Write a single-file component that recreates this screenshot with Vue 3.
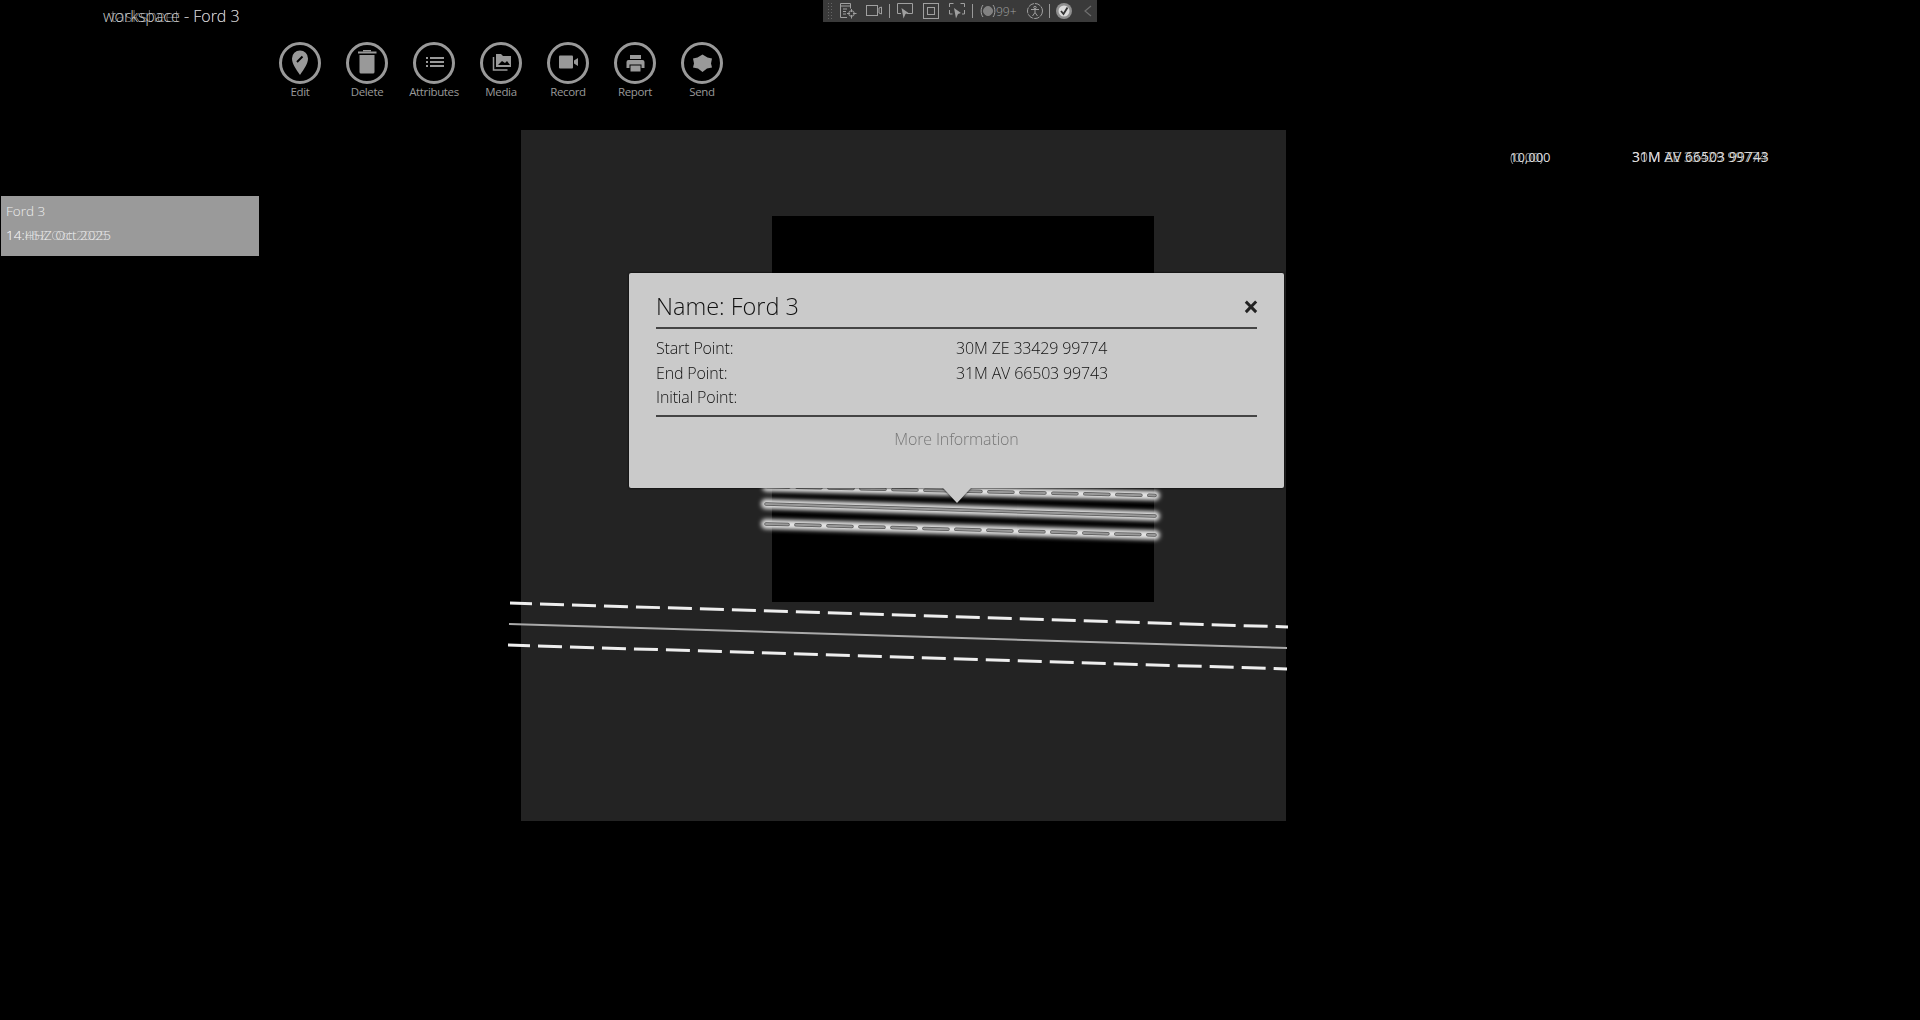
<template>
  <div class="page">
    <header class="top">
      <div class="title">
        <span>workspace - Ford 3</span>
        <span class="ghost">tasksheet - Ford 3</span>
      </div>
      <div class="status">
        <span class="grip"></span>
        <svg width="17" height="16" viewBox="0 0 17 16" class="st" fill="none" stroke="currentColor">
          <path d="M7 14.500H.5V.5h10v5M1 3h9" />
          <path d="M3 6h4M3 8.500h3M3 11h3" />
          <circle cx="11.500" cy="10.500" r="2.800" />
          <path d="M11.500 6v3M11.500 12v3.500M7 10.500h3M13 10.500h3.500" />
        </svg>
        <svg width="16" height="12" viewBox="0 0 16 12" class="st gap-cam" fill="none" stroke="currentColor">
          <rect x="0.500" y="0.500" width="11" height="10" />
          <path d="M13 3l2.500-1v7L13 8z" />
        </svg>
        <i class="sep"></i>
        <svg width="16" height="16" viewBox="0 0 16 16" class="st" fill="none" stroke="currentColor">
          <path d="M4 10.500H.5V.5h15v10H10" />
          <path d="M4.500 5l7 5-3 1-2 4.500z" fill="currentColor" stroke="none" />
        </svg>
        <svg width="16" height="16" viewBox="0 0 16 16" class="st gap-sel" fill="none" stroke="currentColor">
          <rect x="0.500" y="0.500" width="15" height="15" />
          <rect x="4.500" y="4.500" width="7" height="7" />
        </svg>
        <svg width="16" height="16" viewBox="0 0 16 16" class="st gap-sel" fill="none" stroke="currentColor">
          <path d="M.5 4V.5h4M11.500 .5h4V4M.5 7v4h3M15.500 7v4H13" />
          <path d="M5 5l7 5-3 1-2 4.500z" fill="currentColor" stroke="none" />
        </svg>
        <i class="sep"></i>
        <svg width="16" height="14" viewBox="0 0 16 14" class="st" fill="none" stroke="currentColor">
          <path d="M3 1C.5 4 .5 10 3 13M13 1c2.500 3 2.500 9 0 12" />
          <circle cx="8" cy="7" r="4.500" fill="currentColor" opacity="0.7" />
        </svg>
        <span class="count">99+</span>
        <svg width="16" height="16" viewBox="0 0 16 16" class="st gap-acc" fill="none" stroke="currentColor">
          <circle cx="8" cy="8" r="7.500" stroke-dasharray="6 1" />
          <circle cx="8" cy="4.500" r="1.200" />
          <path d="M4 6.500h8M8 6.500v3M8 9.500l-2.500 3.500M8 9.500l2.500 3.500" />
        </svg>
        <i class="sep sep-last"></i>
        <svg width="16" height="16" viewBox="0 0 16 16" class="st">
          <circle cx="8" cy="8" r="8" fill="#8f8f8f" />
          <circle cx="8" cy="8" r="5.500" fill="#dcdcdc" />
          <path d="M5 8l2.500 3L11.500 4.500" fill="none" stroke="#333" stroke-width="1.800" />
        </svg>
        <svg width="8" height="12" viewBox="0 0 8 12" class="st gap-back" fill="none" stroke="#6f6f6f" stroke-width="1.200">
          <path d="M7 1L1 6l6 5" />
        </svg>
      </div>
    </header>

    <nav class="toolbar">
      <button v-for="tool in tools" :key="tool.label" class="tool">
        <svg width="44" height="44" viewBox="0 0 44 44" class="ring">
          <circle cx="22" cy="22" r="19.500" fill="none" stroke="#999" stroke-width="3" />
          <g v-html="tool.icon"></g>
        </svg>
        <span>{{ tool.label }}</span>
      </button>
    </nav>

    <main class="body">
      <aside class="side">
        <div class="card">
          <div class="card-line">Ford 3</div>
          <div class="card-line stack">
            <span>14:HHZ Oct 2025</span>
            <span class="ghost">14:45Z Oct 2025</span>
          </div>
        </div>
      </aside>

      <section class="map">
        <div class="tile"></div>

        <svg class="lines" width="765" height="691" viewBox="0 0 765 691">
          <defs>
            <filter id="halo" x="-5%" y="-100%" width="110%" height="300%">
              <feGaussianBlur stdDeviation="2" />
            </filter>
          </defs>
          <!-- routes on the tile -->
          <g v-for="r in tileRoutes" :key="r.id" fill="none" stroke-linecap="round">
            <path :d="r.d" stroke="#e4e4e4" stroke-width="10" filter="url(#halo)" />
            <path :d="r.d" stroke="#555" stroke-width="3.500" :stroke-dasharray="r.dash" stroke-dashoffset="2" />
            <path :d="r.d" stroke="#999" stroke-width="2" :stroke-dasharray="r.dash" stroke-dashoffset="2" />
          </g>
          <!-- routes on the base map -->
          <g v-for="r in baseRoutes" :key="r.id" fill="none">
            <path :d="r.d" :stroke="r.colour" :stroke-width="r.width" :stroke-dasharray="r.dash" stroke-dashoffset="2" />
          </g>
        </svg>

        <div class="popup">
          <div class="popup-head">
            <h2>Name: Ford 3</h2>
            <span class="close">×</span>
          </div>
          <dl class="rows">
            <template v-for="row in rows" :key="row.k">
              <dt>{{ row.k }}</dt>
              <dd>{{ row.v }}</dd>
            </template>
          </dl>
          <div class="more">More Information</div>
        </div>
      </section>

      <aside class="coords">
        <div class="stack scale">
          <span>10,000</span>
          <span class="ghost">(0,00)</span>
        </div>
        <div class="stack grid-ref">
          <span>31M AV 66503 99743</span>
          <span class="ghost">30M ZE 33429 99774</span>
        </div>
      </aside>
    </main>
  </div>
</template>

<script setup>
const grey = '#999'

const tools = [
  {
    label: 'Edit',
    icon: `<path d="M22 34c-4-6-8-11-8-16.500a8 8 0 0 1 16 0c0 5.500-4 10.500-8 16.500z" fill="${grey}"/><path d="M19 21l5.500-5.500" stroke="#000" stroke-width="2"/>`
  },
  {
    label: 'Delete',
    icon: `<rect x="13" y="10.500" width="18.500" height="2" fill="${grey}"/><rect x="18" y="9" width="8" height="1.500" fill="${grey}"/><path d="M14.500 14h15v17a1.500 1.500 0 0 1-1.500 1.500H16a1.500 1.500 0 0 1-1.500-1.500z" fill="${grey}"/>`
  },
  {
    label: 'Attributes',
    icon: `<g fill="${grey}"><rect x="14" y="16" width="2" height="2"/><rect x="14" y="20" width="2" height="2"/><rect x="14" y="24" width="2" height="2"/><rect x="18" y="16" width="14" height="2"/><rect x="18" y="20" width="14" height="2"/><rect x="18" y="24" width="14" height="2"/></g>`
  },
  {
    label: 'Media',
    icon: `<path d="M14.500 16v13h14" fill="none" stroke="${grey}" stroke-width="1.500"/><path d="M17 13h5l2 2h8v11H17z" fill="${grey}"/><path d="M19 24l4-4 3 2 2-2 3 4z" fill="#000"/>`
  },
  {
    label: 'Record',
    icon: `<rect x="13" y="14.500" width="14" height="13" rx="1" fill="${grey}"/><path d="M28 19.500l4-2.500v8l-4-2.500z" fill="${grey}"/>`
  },
  {
    label: 'Report',
    icon: `<path d="M17 14h11v4H17z" fill="${grey}"/><path d="M15.500 19h14a2 2 0 0 1 2 2v6h-3v-3.500h-12V27h-3v-6a2 2 0 0 1 2-2z" fill="${grey}"/><rect x="17.500" y="24.500" width="10" height="6" fill="${grey}"/>`
  },
  {
    label: 'Send',
    icon: `<path d="M22.500 13.500l5 3 4.500 1-1 5 1 4-5 1-4.500 3.500-4.500-3.500-5-1 1-4-1-5 4.500-1z" fill="${grey}"/>`
  }
]

const rows = [
  { k: 'Start Point:', v: '30M ZE 33429 99774' },
  { k: 'End Point:', v: '31M AV 66503 99743' },
  { k: 'Initial Point:', v: '' }
]

// coordinates are relative to the map panel
const tileRoutes = [
  { id: 't1', d: 'M246 356.500L634 365.500', dash: '24 8' },
  { id: 't2', d: 'M245 374L634 386', dash: 'none' },
  { id: 't3', d: 'M245 394L634 405', dash: '24 8' }
]

const baseRoutes = [
  { id: 'b1', d: 'M-11 473L767 497', colour: '#eee', width: 3, dash: '24 8' },
  { id: 'b2', d: 'M-12 494L766 518', colour: '#aaa', width: 2, dash: 'none' },
  { id: 'b3', d: 'M-13 515L766 539', colour: '#eee', width: 3, dash: '24 8' }
]
</script>

<style scoped>
.page {
  width: 1920px;
  height: 1020px;
  background: #000;
  overflow: hidden;
  font-family: "Open Sans", "Liberation Sans", sans-serif;
  color: #bbb;
  display: flex;
  flex-direction: column;
}

.top {
  display: flex;
  height: 40.500px;
  padding-left: 103px;
  flex-shrink: 0;
}

.title {
  display: grid;
  width: 134px;
  height: 32px;
  margin-right: 586px;
  font-size: 16px;
  font-weight: 300;
  line-height: 32px;
  color: #ccc;
  text-align: right;
}

.title > span {
  grid-area: 1 / 1;
  white-space: nowrap;
  justify-self: end;
}

.stack > span {
  grid-area: 1 / 1;
  white-space: nowrap;
}

.ghost {
  opacity: 0.6;
}

.status {
  display: flex;
  align-items: center;
  width: 274px;
  height: 22px;
  background: #3a3a3a;
  color: #a0a0a0;
  box-sizing: border-box;
}

.grip {
  width: 6px;
  height: 18px;
  margin: 0 7px 0 4px;
  background-image: radial-gradient(#666 0.6px, transparent 0.8px);
  background-size: 3px 3px;
}

.st {
  flex-shrink: 0;
}

.gap-cam {
  margin-left: 9px;
}

.gap-sel {
  margin-left: 10px;
}

.gap-acc {
  margin-left: 11px;
}

.gap-back {
  margin-left: 12px;
}

.sep {
  width: 1px;
  height: 14px;
  background: #999;
  margin: 0 7px;
}

.sep-last {
  margin: 0 6px;
}

.count {
  width: 20px;
  font-size: 12px;
  font-weight: 300;
  white-space: nowrap;
}

.toolbar {
  display: flex;
  gap: 23px;
  padding-left: 278px;
  height: 89.500px;
  flex-shrink: 0;
}

.tool {
  width: 44px;
  padding: 0;
  border: 0;
  background: none;
  color: #999;
  font: inherit;
  font-size: 11.500px;
  letter-spacing: -0.35px;
  display: flex;
  flex-direction: column;
  align-items: center;
  overflow: visible;
}

.tool span {
  white-space: nowrap;
  line-height: 13px;
}

.ring {
  display: block;
}

.body {
  display: grid;
  grid-template-columns: 521px 765px 1fr;
  align-items: start;
}

.side {
  padding: 66px 0 0 1px;
}

.card {
  width: 258px;
  height: 60px;
  box-sizing: border-box;
  background: #9a9a9a;
  padding: 3px 5px;
  font-size: 13.500px;
  color: #eee;
  font-weight: 300;
}

.card-line {
  line-height: 24px;
}

.stack {
  display: grid;
}

.map {
  position: relative;
  height: 691px;
  background: #232323;
}

.tile {
  position: absolute;
  left: 251px;
  top: 86px;
  width: 382px;
  height: 386px;
  background: #000;
}

.lines {
  position: absolute;
  left: 0;
  top: 0;
  overflow: visible;
}

.popup {
  position: absolute;
  left: 108px;
  top: 143px;
  width: 655px;
  height: 215px;
  box-sizing: border-box;
  background: #cacaca;
  border-radius: 2px;
  padding: 16px 27px 0;
  color: #111;
  font-weight: 300;
  filter: drop-shadow(0 0 1px #000);
}

.popup::after {
  content: "";
  position: absolute;
  left: 50%;
  bottom: -15px;
  margin-left: -14px;
  border-left: 14px solid transparent;
  border-right: 14px solid transparent;
  border-top: 15px solid #cacaca;
}

.popup-head {
  display: flex;
  justify-content: space-between;
  align-items: flex-start;
  height: 38px;
  border-bottom: 2px solid #444;
}

.popup-head h2 {
  margin: 0;
  font-size: 23.500px;
  font-weight: 300;
  line-height: 34px;
}

.close {
  font-size: 28px;
  font-weight: 700;
  line-height: 34px;
  margin-right: -2px;
  color: #222;
}

.rows {
  display: grid;
  grid-template-columns: 300px 1fr;
  grid-auto-rows: 24.500px;
  margin: 7px 0 0;
  padding-bottom: 5px;
  border-bottom: 2px solid #444;
  font-size: 16px;
  letter-spacing: -0.15px;
  line-height: 24px;
}

.rows dt,
.rows dd {
  margin: 0;
  white-space: nowrap;
}

.more {
  text-align: center;
  margin-top: 10px;
  font-size: 16px;
  letter-spacing: -0.15px;
  color: #777;
  line-height: 24px;
}

.coords {
  padding: 17px 0 0 224px;
  display: flex;
  font-size: 14px;
  color: #ddd;
  line-height: 20px;
}

.scale {
  width: 122px;
  font-size: 13px;
}
</style>

<style>
html,
body {
  background: #000;
}
</style>
